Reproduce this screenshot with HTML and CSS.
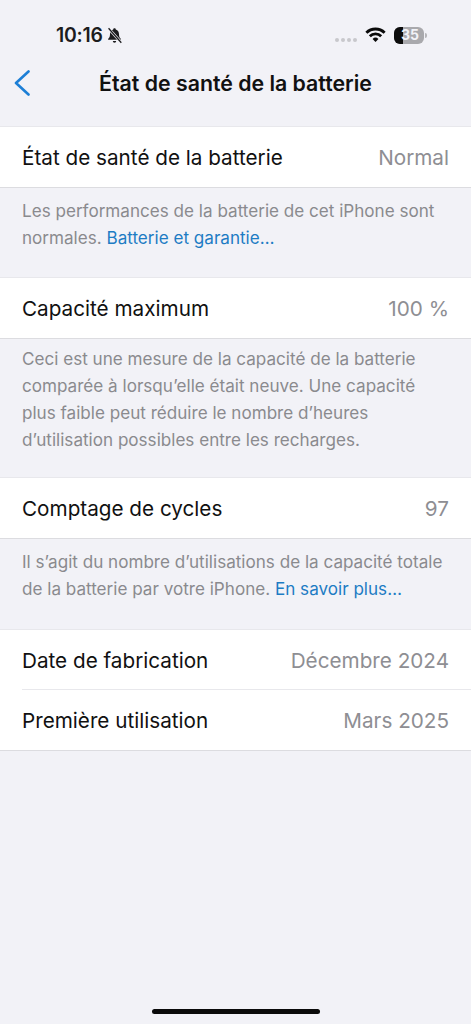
FILE: index.html
```html
<!DOCTYPE html>
<html lang="fr">
<head>
<meta charset="utf-8">
<title>État de santé de la batterie</title>
<link rel="stylesheet" href="styles.css">
</head>
<body>
<div class="screen">
  <header class="status">
    <div class="status-left">
      <span class="time">10:16</span>
      <svg class="bell" viewBox="0 0 20 20" width="17" height="17" aria-hidden="true">
        <path d="M10 1.500c.9 0 1.500.6 1.500 1.400 2.600.7 3.800 2.900 3.800 5.600 0 3 1 4.200 2.200 5.600v1H2.500v-1c1.200-1.400 2.200-2.600 2.200-5.600 0-2.700 1.200-4.900 3.800-5.600 0-.8.600-1.400 1.500-1.400z" fill="#1c1c1e"/>
        <path d="M8 16.500h4a2 2 0 0 1-4 0z" fill="#1c1c1e"/>
        <path d="M3 1.500l15 17" stroke="#f2f2f7" stroke-width="3.200"/>
        <path d="M3 1.500l15 17" stroke="#1c1c1e" stroke-width="1.500"/>
      </svg>
    </div>
    <div class="status-right">
      <span class="dots"><i></i><i></i><i></i><i></i></span>
      <svg class="wifi" viewBox="0 0 20 15" width="21" height="16" aria-hidden="true">
        <path d="M1.300 5.400a12.300 12.300 0 0 1 17.400 0" fill="none" stroke="#0a0a0a" stroke-width="2.700"/>
        <path d="M4.600 8.700a7.600 7.600 0 0 1 10.800 0" fill="none" stroke="#0a0a0a" stroke-width="2.700"/>
        <path d="M7.200 11.300L10 14.200l2.800-2.900a4 4 0 0 0-5.600 0z" fill="#0a0a0a"/>
      </svg>
      <span class="battery"><span class="battery-fill"></span><span class="battery-num">35</span></span>
      <span class="battery-cap"></span>
    </div>
  </header>

  <nav class="nav">
    <svg class="back" viewBox="0 0 18 26" width="18" height="26" aria-hidden="true">
      <path d="M15.500 1.500L3 13l12.500 11.500" fill="none" stroke="#1d7fd6" stroke-width="2.600" stroke-linecap="round" stroke-linejoin="round"/>
    </svg>
    <h1 class="title">État de santé de la batterie</h1>
  </nav>

  <section class="group first">
    <div class="row"><span>État de santé de la batterie</span><span class="value">Normal</span></div>
  </section>
  <p class="note two">Les performances de la batterie de cet iPhone sont normales. <a class="link">Batterie et garantie…</a></p>

  <section class="group">
    <div class="row"><span>Capacité maximum</span><span class="value">100 %</span></div>
  </section>
  <p class="note four">Ceci est une mesure de la capacité de la batterie comparée à lorsqu’elle était neuve. Une capacité plus faible peut réduire le nombre d’heures d’utilisation possibles entre les recharges.</p>

  <section class="group">
    <div class="row"><span>Comptage de cycles</span><span class="value">97</span></div>
  </section>
  <p class="note two last-note">Il s’agit du nombre d’utilisations de la capacité totale de la batterie par votre iPhone. <a class="link">En savoir plus…</a></p>

  <section class="group">
    <div class="row divided"><span>Date de fabrication</span><span class="value">Décembre 2024</span></div>
    <div class="row"><span>Première utilisation</span><span class="value">Mars 2025</span></div>
  </section>

  <div class="home-indicator"></div>
</div>
</body>
</html>
```
FILE: styles.css
```css
* { box-sizing: border-box; }
html, body { margin: 0; padding: 0; }
body {
  background: #f2f2f7;
  font-family: Inter, "Liberation Sans", sans-serif;
  color: #111;
}
.screen {
  width: 471px;
  height: 1024px;
  position: relative;
  overflow: hidden;
  display: flex;
  flex-direction: column;
}
.status {
  height: 50px;
  padding: 20px 44px 0 56px;
  display: flex;
  justify-content: space-between;
  align-items: center;
}
.status-left { display: flex; align-items: center; gap: 3px; }
.time { font-size: 19.400px; font-weight: 600; color: #1c1c1e; letter-spacing: -0.2px; }
.status-right { display: flex; align-items: center; }
.dots { display: flex; gap: 2px; margin: 10px 8px 0 0; }
.dots i { width: 4px; height: 4px; border-radius: 50%; background: #c8c8cc; display: block; }
.wifi { margin-right: 8px; }
.battery {
  width: 30px;
  height: 17px;
  border-radius: 6px;
  background: #a9a9ad;
  position: relative;
  overflow: hidden;
  display: flex;
  align-items: center;
  justify-content: center;
  padding-left: 2px;
}
.battery-fill { position: absolute; left: 0; top: 0; bottom: 0; width: 9px; background: #0c0c0c; }
.battery-num { position: relative; font-size: 14px; font-weight: 700; color: #f2f2f7; line-height: 1; }
.battery-cap { width: 2px; height: 5px; background: #b5b5b9; margin-left: 1px; border-radius: 0 2px 2px 0; }
.nav {
  height: 66px;
  position: relative;
  display: flex;
  align-items: center;
  justify-content: center;
}
.back { position: absolute; left: 13px; top: 20px; }
.title { margin: 0; font-size: 21.300px; font-weight: 600; color: #111; }
.group {
  background: #fff;
  border-top: 1px solid #e8e8ec;
  border-bottom: 1px solid #dcdce0;
}
.first { margin-top: 10px; }
.row {
  height: 60px;
  padding: 0 22px;
  display: flex;
  align-items: center;
  justify-content: space-between;
  font-size: 20.700px;
  color: #111;
}
.divided { position: relative; }
.divided::after {
  content: "";
  position: absolute;
  left: 22px;
  right: 0;
  bottom: 0;
  height: 1px;
  background: #e8e8ec;
}
.value { color: #8e8e93; }
.note {
  margin: 0;
  padding: 9px 22px 0;
  font-size: 17.100px;
  line-height: 27px;
  color: #8a8a8e;
}
.note.two { height: 89px; }
.note.last-note { height: 90px; }
.note.four { height: 138px; padding-top: 6px; }
.link { color: #1d7cc4; }
.home-indicator {
  position: absolute;
  left: 152px;
  top: 1009px;
  width: 168px;
  height: 5px;
  border-radius: 3px;
  background: #0a0a0a;
}
```
